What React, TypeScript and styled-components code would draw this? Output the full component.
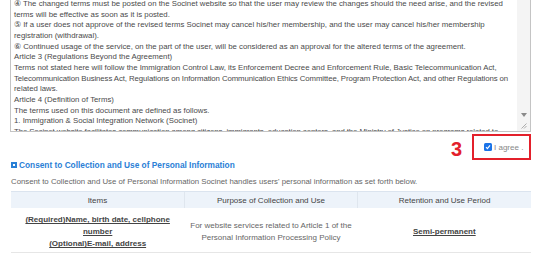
import React from "react";
import styled, {createGlobalStyle} from "styled-components";

const GlobalStyle = createGlobalStyle`
  html, body {
    margin: 0;
    padding: 0;
    background: #fff;
    overflow: hidden;
  }
  body {
    font-family: "Liberation Sans", Arial, sans-serif;
    color: #444;
  }
`;

const Page = styled.div`
  width: 533px;
  height: 261px;
  padding: 0 2px 0 10px;
  box-sizing: border-box;
  overflow: hidden;
`;

const TermsBox = styled.div`
  display: flex;
  height: 134px;
  margin-top: -2px;
  border: 1px solid #c4c4c4;
  box-sizing: border-box;
  overflow: hidden;
`;

const TermsText = styled.div`
  flex: 1;
  padding: 0 0 0 3px;
  font-size: 7.8px;
  line-height: 10.65px;
  color: #4a4a4a;
  white-space: nowrap;
  overflow: hidden;
`;

const TermsLine = styled.div<{$tight?: boolean}>`
  letter-spacing: ${p => (p.$tight ? "-0.09px" : "normal")};
`;

const ScrollTrack = styled.div`
  width: 13px;
  background: #f4f4f4;
  display: flex;
  flex-direction: column;
  justify-content: flex-end;
  align-items: center;
  padding-bottom: 2px;
  gap: 5px;
`;

const Arrow = styled.div`
  width: 0;
  height: 0;
  border-left: 3px solid transparent;
  border-right: 3px solid transparent;
  border-top: 4px solid #8a8a8a;
`;

const AgreeRow = styled.div`
  display: flex;
  justify-content: flex-end;
  align-items: center;
  gap: 10px;
  height: 26px;
  margin-top: 2px;
`;

const StepNumber = styled.span`
  font-size: 20px;
  font-weight: bold;
  color: #e3202b;
  line-height: 1;
  padding-top: 4px;
`;

const AgreeBox = styled.label`
  display: flex;
  align-items: center;
  gap: 2px;
  width: 59px;
  height: 26px;
  box-sizing: border-box;
  border: 2px solid #e3202b;
  padding-left: 10px;
  font-size: 8px;
  color: #888;
`;

const Check = styled.span`
  width: 8px;
  height: 8px;
  border-radius: 1.5px;
  background: #1a73e8;
  display: flex;
  align-items: center;
  justify-content: center;
`;

const Heading = styled.h3`
  display: flex;
  align-items: center;
  gap: 2px;
  margin: -1px 0 0 1px;
  font-size: 8.3px;
  line-height: 12px;
  font-weight: bold;
  color: #2a80d6;
`;

const Bullet = styled.span`
  width: 6px;
  height: 6px;
  background: #2a80d6;
  display: flex;
  align-items: center;
  justify-content: center;

  &::after {
    content: "";
    width: 2px;
    height: 2px;
    background: #fff;
  }
`;

const Desc = styled.p`
  margin: 6px 0 0 1px;
  font-size: 7.8px;
  line-height: 10px;
  color: #666;
`;

const Table = styled.table`
  width: 520px;
  margin: 4px 0 0 1px;
  border-collapse: collapse;
  table-layout: fixed;
  font-size: 8px;

  th {
    height: 16px;
    background: #edf3fa;
    color: #444;
    font-weight: normal;
    border-top: 1px solid #dbe4ef;
    border-left: 1px solid #dfe6ee;
    padding: 0;
  }

  th:first-child, td:first-child {
    border-left: none;
  }

  td {
    height: 44px;
    text-align: center;
    line-height: 12px;
    border-bottom: 1px solid #e6e6e6;
    padding: 5px 0 0;
    box-sizing: border-box;
    color: #666;
  }
`;

const Linked = styled.span<{$bold?: boolean}>`
  color: #444;
  text-decoration: underline;
  font-weight: ${p => (p.$bold ? "bold" : "normal")};
`;

const lines = [
    "④ The changed terms must be posted on the Socinet website so that the user may review the changes should the need arise, and the revised",
    "terms will be effective as soon as it is posted.",
    "⑤ If a user does not approve of the revised terms Socinet may cancel his/her membership, and the user may cancel his/her membership",
    "registration (withdrawal).",
    "⑥ Continued usage of the service, on the part of the user, will be considered as an approval for the altered terms of the agreement.",
    "Article 3 (Regulations Beyond the Agreement)",
    "Terms not stated here will follow the Immigration Control Law, its Enforcement Decree and Enforcement Rule, Basic Telecommunication Act,",
    "Telecommunication Business Act, Regulations on Information Communication Ethics Committee, Program Protection Act, and other Regulations on",
    "related laws.",
    "Article 4 (Definition of Terms)",
    "The terms used on this document are defined as follows.",
    "1. Immigration & Social Integration Network (Socinet)",
    "The Socinet website facilitates communication among citizens, immigrants, education centers, and the Ministry of Justice on programs related to",
];

const App: React.FunctionComponent = () => {
    return (
        <Page>
            <GlobalStyle/>
            <TermsBox>
                <TermsText>
                    {lines.map((l, i) => <TermsLine key={i} $tight={i === 7 || i === 12}>{l}</TermsLine>)}
                </TermsText>
                <ScrollTrack>
                    <Arrow/>
                    <svg width="7" height="7" viewBox="0 0 7 7">
                        <path d="M6.5 1.5 L1.5 6.5 M6.5 4 L4 6.5" stroke="#999" strokeWidth="0.8"/>
                    </svg>
                </ScrollTrack>
            </TermsBox>

            <AgreeRow>
                <StepNumber>3</StepNumber>
                <AgreeBox>
                    <Check>
                        <svg width="6" height="6" viewBox="0 0 6 6">
                            <path d="M1 3.2 L2.4 4.6 L5 1.4" stroke="#fff" strokeWidth="1.1" fill="none"/>
                        </svg>
                    </Check>
                    <span>I agree .</span>
                </AgreeBox>
            </AgreeRow>

            <Heading><Bullet/>Consent to Collection and Use of Personal Information</Heading>
            <Desc>Consent to Collection and Use of Personal Information Socinet handles users' personal information as set forth below.</Desc>

            <Table>
                <thead>
                <tr>
                    <th>Items</th>
                    <th>Purpose of Collection and Use</th>
                    <th>Retention and Use Period</th>
                </tr>
                </thead>
                <tbody>
                <tr>
                    <td>
                        <Linked $bold>(Required)Name, birth date, cellphone<br/>number<br/>(Optional)E-mail, address</Linked>
                    </td>
                    <td>For website services related to Article 1 of the<br/>Personal Information Processing Policy</td>
                    <td><Linked $bold>Semi-permanent</Linked></td>
                </tr>
                </tbody>
            </Table>
        </Page>
    );
};

export default App;
